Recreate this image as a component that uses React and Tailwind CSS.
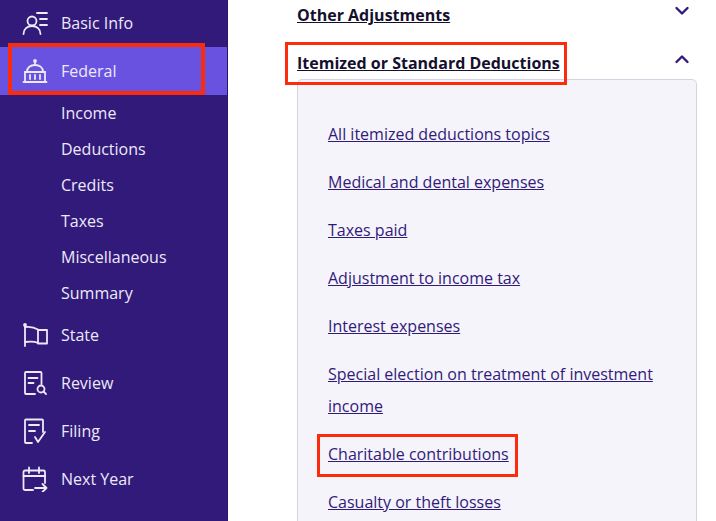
const links = [
  'All itemized deductions topics',
  'Medical and dental expenses',
  'Taxes paid',
  'Adjustment to income tax',
  'Interest expenses',
  'Special election on treatment of investment income',
  'Charitable contributions',
  'Casualty or theft losses',
];

const subItems = ['Income', 'Deductions', 'Credits', 'Taxes', 'Miscellaneous', 'Summary'];

function Icon({ children }) {
  return (
    <svg width="26" height="26" viewBox="0 0 26 26" fill="none" stroke="currentColor" strokeWidth="1.8" strokeLinecap="round" strokeLinejoin="round" className="shrink-0">
      {children}
    </svg>
  );
}

function NavRow({ icon, label, active }) {
  return (
    <div className={`flex h-12 items-center pl-[22px] text-[16px] text-[#ece9f8] ${active ? 'bg-[#6a52e0]' : ''}`}>
      <Icon>{icon}</Icon>
      <span className="ml-[13px]">{label}</span>
    </div>
  );
}

function Chevron({ up }) {
  return (
    <svg width="16" height="10" viewBox="0 0 16 10" fill="none" stroke="#321a7a" strokeWidth="2.4" strokeLinecap="round" strokeLinejoin="round">
      <path d={up ? 'M2.5 8 8 2.5 13.5 8' : 'M2.5 2 8 7.5 13.5 2'} />
    </svg>
  );
}

export default function App() {
  return (
    <div className="relative flex h-[521px] w-[716px] overflow-hidden bg-white font-['Open_Sans','Noto_Sans',sans-serif]">
      <aside className="-mt-px w-[228px] shrink-0 border-r border-[#2a1568] bg-[#321a7a]">
        <NavRow
          label="Basic Info"
          icon={
            <>
              <circle cx="10" cy="11" r="4.500" />
              <path d="M1.500 24c0-5 3.800-8 8.500-8s8.500 3 8.500 8" />
              <path d="M15 3h10M18 9h7M18 15h7" />
            </>
          }
        />
        <NavRow
          active
          label="Federal"
          icon={
            <>
              <circle cx="13" cy="3" r="1" />
              <path d="M13 4v3" />
              <path d="M5 14c0-4.500 3.500-7 8-7s8 2.500 8 7" />
              <path d="M3 14h20" />
              <path d="M8 17v4M13 17v4M18 17v4" />
              <path d="M1.500 24h23" />
              <path d="M3 14v10M23 14v10" />
            </>
          }
        />
        {subItems.map((item) => (
          <div key={item} className="flex h-9 items-center pl-[61px] text-[16px] text-[#ece9f8]">
            {item}
          </div>
        ))}
        <NavRow
          label="State"
          icon={
            <>
              <circle cx="3" cy="3" r="1" />
              <path d="M3 3.500V24" />
              <path d="M3 5c4-.500 9 0 13 2.500V21c-4-2-9-1.500-13-1" />
              <path d="M16 8h9v13.500h-9" />
            </>
          }
        />
        <NavRow
          label="Review"
          icon={
            <>
              <path d="M13 24H4a1 1 0 0 1-1-1V3a1 1 0 0 1 1-1h14.500a1 1 0 0 1 1 1v11" />
              <path d="M6.500 8h9M6.500 13h5" />
              <circle cx="19" cy="19" r="3.500" />
              <path d="m21.500 21.500 2.500 2.500" />
            </>
          }
        />
        <NavRow
          label="Filing"
          icon={
            <>
              <path d="M10 25H4a1 1 0 0 1-1-1V2.500a1 1 0 0 1 1-1h16a1 1 0 0 1 1 1V14" />
              <path d="M7 7h10M7 13h6" />
              <path d="m13 19 3 5 7-10" />
            </>
          }
        />
        <NavRow
          label="Next Year"
          icon={
            <>
              <path d="M11 24H3a1.500 1.500 0 0 1-1.500-1.500V6A1.500 1.500 0 0 1 3 4.500h18.500A1.500 1.500 0 0 1 23 6v11" />
              <path d="M1.500 10h21.500M7 1.500V7M17 1.500V7" />
              <path d="M13 22h11.500M20.500 18l4 4-4 4" />
            </>
          }
        />
      </aside>

      <main className="min-w-0 flex-1 pl-[69px] pr-[19px] text-[16px]">
        <div className="flex h-[31px] items-start justify-between pr-1">
          <span className="font-bold leading-[31px] text-[#14102e] underline">Other Adjustments</span>
          <span className="mt-[6px] mr-[3px]"><Chevron /></span>
        </div>
        <div className="mt-[17px] flex h-[31px] items-start justify-between pr-1">
          <span className="font-bold leading-[31px] text-[#14102e] underline">Itemized or Standard Deductions</span>
          <span className="mt-[6px] mr-[3px]"><Chevron up /></span>
        </div>
        <div className="h-[600px] rounded-t-[5px] border border-[#d4d3df] bg-[#f4f4fa] pl-[30px] pr-6 pt-[38px]">
          <ul className="flex flex-col gap-4">
            {links.map((link) => (
              <li key={link} className="leading-8 text-[#321a7a] underline">{link}</li>
            ))}
          </ul>
        </div>
      </main>

      {/* red annotation boxes drawn over the screenshot */}
      <div className="absolute left-[8px] top-[43px] h-[52px] w-[197px] border-4 border-[#fb2c0e]" />
      <div className="absolute left-[285px] top-[42px] h-[43px] w-[282px] border-[3px] border-[#fb2c0e]" />
      <div className="absolute left-[317px] top-[434px] h-[43px] w-[201px] border-[3px] border-[#fb2c0e]" />
    </div>
  );
}
